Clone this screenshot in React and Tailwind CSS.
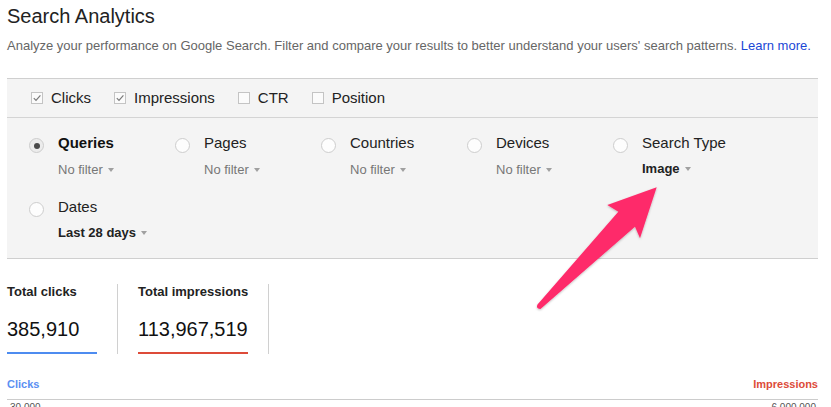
import React from 'react';

const font = { fontFamily: '"Liberation Sans", Arial, sans-serif' };

const Caret = () => (
    <span className="inline-block ml-[5px] align-middle mb-[2px] w-0 h-0 border-l-[3.5px] border-r-[3.5px] border-t-[4px] border-l-transparent border-r-transparent border-t-[#a0a0a0]" />
);

const Check = ({ checked, label }) => (
    <div className="flex items-center gap-[8px]">
        <span className="w-[12px] h-[12px] border border-[#c4c4c4] bg-[#fbfbfb] flex items-center justify-center">
            {checked && (
                <svg width="10" height="10" viewBox="0 0 10 10">
                    <path d="M1.8 5.2 L4 7.4 L8.4 2.4" fill="none" stroke="#7a7a7a" strokeWidth="1.2" />
                </svg>
            )}
        </span>
        <span className="text-[15px] leading-[20px] text-[#222]">{label}</span>
    </div>
);

const Dimension = ({ label, sub, active, strong }) => (
    <div className="w-[146px] flex">
        <span className={`mt-[5px] w-[15px] h-[15px] rounded-full border border-[#cdcdcd] flex items-center justify-center shrink-0 ${active ? 'bg-[#ececec]' : 'bg-[#fdfdfd]'}`}>
            {active && <span className="w-[6px] h-[6px] rounded-full bg-[#4a4a4a]" />}
        </span>
        <div className="ml-[14px]">
            <div className={`text-[15px] leading-[20px] whitespace-nowrap ${active ? 'font-bold text-[#111]' : 'text-[#222]'}`}>{label}</div>
            <div className={`text-[13px] leading-[20px] whitespace-nowrap ${strong ? 'mt-[6px] font-bold text-[#222]' : 'mt-[7px] text-[#777]'}`}>
                {sub}<Caret />
            </div>
        </div>
    </div>
);

const Stat = ({ label, value, color, first }) => (
    <div className={`flex ${first ? '' : 'pl-[20px]'} pr-[20px] border-r border-[#d0d0d0]`}>
        <div className="min-w-[90px] flex flex-col">
            <div className="text-[13px] leading-[16px] font-bold text-[#222] whitespace-nowrap">{label}</div>
            <div className="mt-[17px] text-[20px] leading-[24px] text-[#111]">{value}</div>
            <div className={`mt-[11px] h-[2px] ${color}`} />
        </div>
    </div>
);

export default function App() {
    return (
        <div className="relative w-[831px] h-[407px] overflow-hidden bg-white pl-[7px] pr-[13px]" style={font}>
            <h1 className="pt-[3px] text-[20px] leading-[26px] text-[#222]">Search Analytics</h1>
            <p className="mt-[8px] text-[13px] leading-[18px] text-[#666] whitespace-nowrap">
                Analyze your performance on Google Search. Filter and compare your results to better understand your users' search patterns. <span className="text-[#1a47d6]">Learn more.</span>
            </p>

            <div className="mt-[23px] bg-[#f4f4f4] border-t border-b border-[#cfcfcf]">
                <div className="h-[39px] flex items-center gap-[23px] pl-[24px] border-b border-[#d4d4d4]">
                    <Check checked label="Clicks" />
                    <Check checked label="Impressions" />
                    <Check label="CTR" />
                    <Check label="Position" />
                </div>
                <div className="h-[140px] pt-[15px] pl-[22px] grid grid-cols-[repeat(5,146px)] content-start gap-y-[17px]">
                    <Dimension label="Queries" sub="No filter" active />
                    <Dimension label="Pages" sub="No filter" />
                    <Dimension label="Countries" sub="No filter" />
                    <Dimension label="Devices" sub="No filter" />
                    <Dimension label="Search Type" sub="Image" strong />
                    <Dimension label="Dates" sub="Last 28 days" strong />
                </div>
            </div>

            <div className="mt-[25px] flex">
                <Stat first label="Total clicks" value="385,910" color="bg-[#4d8cf0]" />
                <Stat label="Total impressions" value="113,967,519" color="bg-[#dd4b39]" />
            </div>

            <div className="mt-[23px] flex justify-between text-[11px] leading-[14px] font-bold">
                <span className="text-[#5b8ff2]">Clicks</span>
                <span className="text-[#dd4b39]">Impressions</span>
            </div>
            <div className="mt-[8px] border-t border-[#cccccc] flex justify-between text-[10px] leading-[12px] text-[#555] pt-[2px]">
                <span className="pl-[3px]">30,000</span>
                <span className="pr-[2px]">6,000,000</span>
            </div>

            <svg className="absolute inset-0 pointer-events-none" width="831" height="407" viewBox="0 0 831 407">
                <defs>
                    <filter id="sh" x="-20%" y="-20%" width="140%" height="140%">
                        <feDropShadow dx="0" dy="1" stdDeviation="1" floodColor="#000" floodOpacity="0.25" />
                    </filter>
                </defs>
                <path
                    d="M656.7 187.3 L607.3 205 L618.3 211.7 L537.5 304.5 Q535.5 308.8 540.5 309 L635 226.7 L640 238.3 Z"
                    fill="#fe2c6b"
                    filter="url(#sh)"
                />
            </svg>
        </div>
    );
}
